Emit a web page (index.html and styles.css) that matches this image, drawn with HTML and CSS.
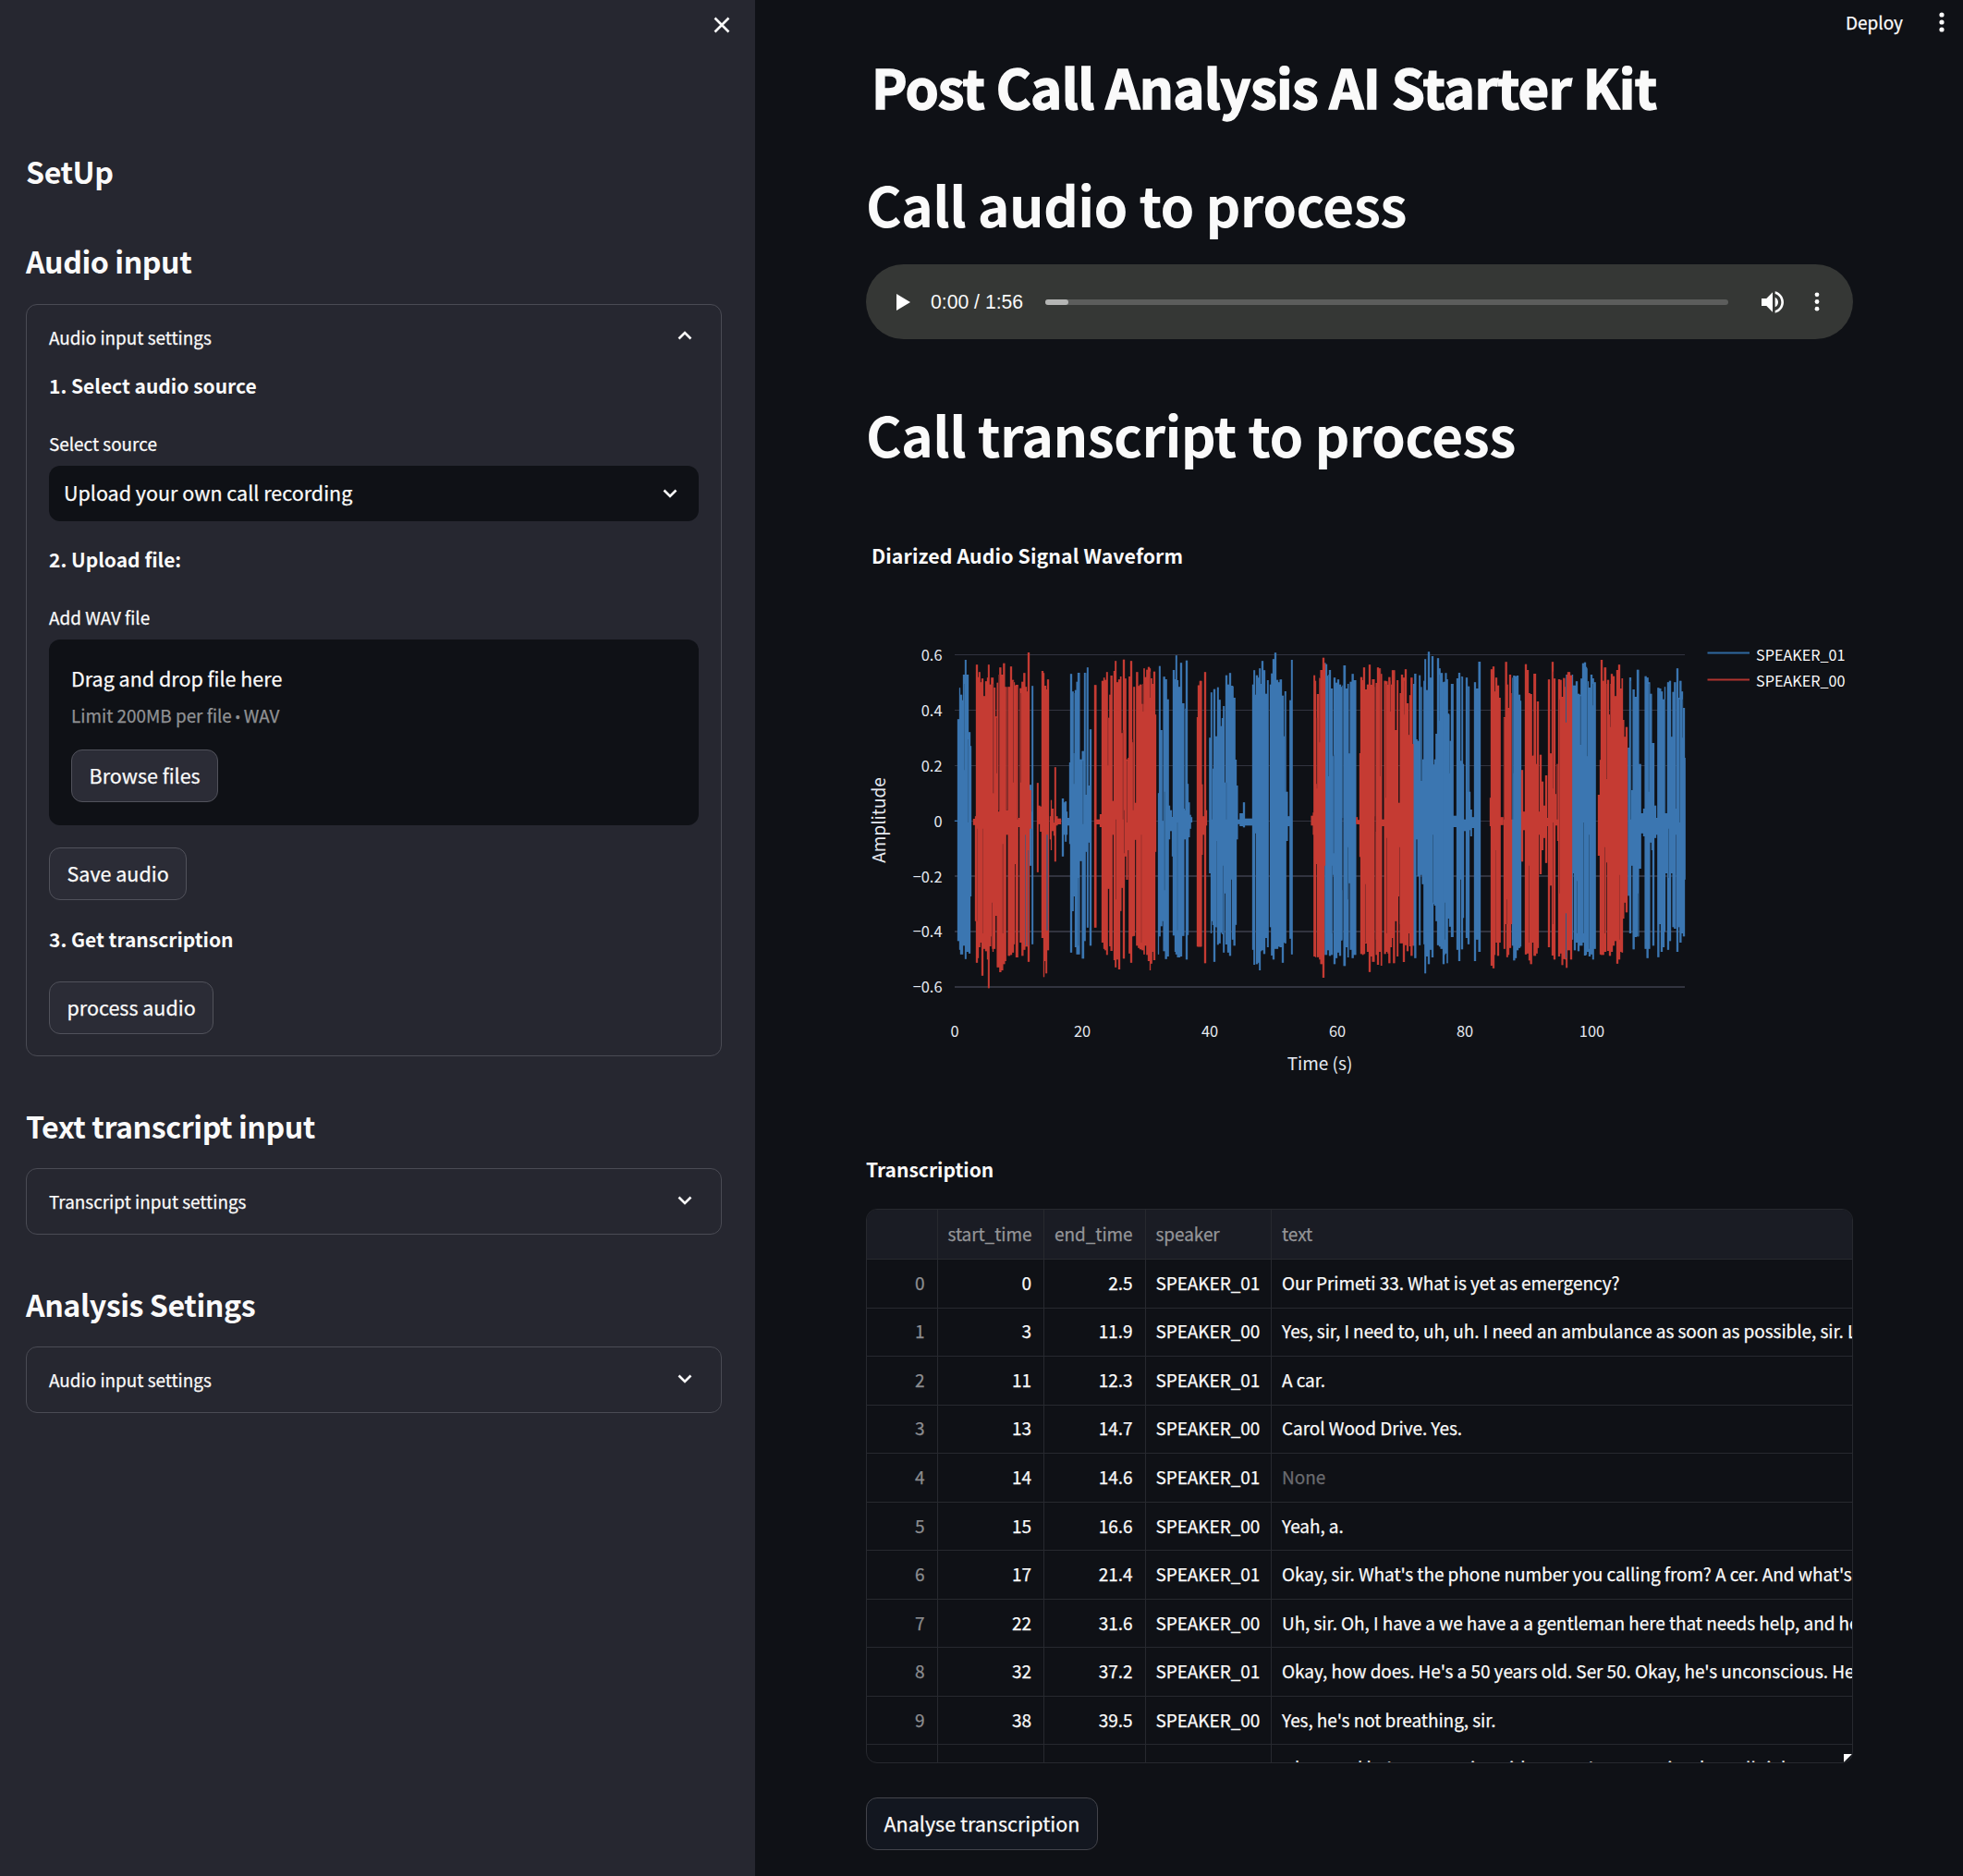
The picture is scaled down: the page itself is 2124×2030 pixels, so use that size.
FILE: index.html
```html
<!DOCTYPE html>
<html lang="en">
<head>
<meta charset="utf-8">
<title>Post Call Analysis AI Starter Kit</title>
<link rel="stylesheet" href="styles.css">
</head>
<body>
<div class="app">
  <aside class="sidebar">
    <div class="sidebar-top">
      <svg class="close" viewBox="0 0 20 20"><path d="M2.5 2.5 17.5 17.5M17.5 2.5 2.5 17.5"/></svg>
    </div>
    <h2 class="side-title first">SetUp</h2>
    <h2 class="side-title second">Audio input</h2>
    <section class="expander open">
      <div class="summary"><span>Audio input settings</span><svg class="chev" viewBox="0 0 16 10"><path d="M1.5 8.5 8 2l6.500 6.500"/></svg></div>
      <div class="expander-body">
        <p class="step">1. Select audio source</p>
        <label class="field-label">Select source</label>
        <div class="select"><span>Upload your own call recording</span><svg class="chev" viewBox="0 0 16 10"><path d="M1.500 1.500 8 8l6.500-6.500"/></svg></div>
        <p class="step">2. Upload file:</p>
        <label class="field-label">Add WAV file</label>
        <div class="uploader">
          <div class="drag">Drag and drop file here</div>
          <div class="limit">Limit 200MB per file <span class="bullet">•</span> WAV</div>
          <button class="btn">Browse files</button>
        </div>
        <button class="btn save">Save audio</button>
        <p class="step">3. Get transcription</p>
        <button class="btn process">process audio</button>
      </div>
    </section>
    <h2 class="side-title later">Text transcript input</h2>
    <section class="expander">
      <div class="summary"><span>Transcript input settings</span><svg class="chev" viewBox="0 0 16 10"><path d="M1.500 1.500 8 8l6.500-6.500"/></svg></div>
    </section>
    <h2 class="side-title later">Analysis Setings</h2>
    <section class="expander">
      <div class="summary"><span>Audio input settings</span><svg class="chev" viewBox="0 0 16 10"><path d="M1.500 1.500 8 8l6.500-6.500"/></svg></div>
    </section>
  </aside>

  <main class="main">
    <header class="toolbar">
      <span>Deploy</span>
      <svg class="kebab" viewBox="0 0 6 22"><circle cx="3" cy="3" r="2.600"/><circle cx="3" cy="11" r="2.600"/><circle cx="3" cy="19" r="2.600"/></svg>
    </header>
    <div class="content">
      <h1 class="title">Post Call Analysis AI Starter Kit</h1>
      <h1 class="heading call-audio">Call audio to process</h1>
      <div class="player">
        <svg class="play" viewBox="0 0 15 18"><path d="M0 0v18l15-9z"/></svg>
        <span class="time">0:00 / 1:56</span>
        <div class="track"><div class="buffered"></div></div>
        <svg class="volume" viewBox="3 3 18 18"><path d="M3 9v6h4l5 5V4L7 9H3zm13.500 3A4.500 4.500 0 0 0 14 7.970v8.050c1.480-.73 2.500-2.250 2.500-4.020zM14 3.230v2.060c2.890.86 5 3.540 5 6.710s-2.110 5.850-5 6.710v2.060c4.010-.91 7-4.490 7-8.770s-2.990-7.860-7-8.770z"/></svg>
        <svg class="player-menu" viewBox="0 0 6 22"><circle cx="3" cy="3" r="2.500"/><circle cx="3" cy="11" r="2.500"/><circle cx="3" cy="19" r="2.500"/></svg>
      </div>
      <h1 class="heading call-transcript">Call transcript to process</h1>

      <svg class="chart" viewBox="937 560 1068 640">
        <text class="chart-title" x="943" y="609.500" textLength="337">Diarized Audio Signal Waveform</text>
        <g class="grid">
          <path d="M1033 708.500H1823M1033 768.500H1823M1033 828.500H1823M1033 888.500H1823" stroke-width="1"/>
          <path d="M1033 948H1823M1033 1008H1823M1033 1068H1823" stroke-width="2"/>
        </g>
        <g id="waves" transform="translate(1030 690) scale(.33333)"></g>
        <g class="tick" text-anchor="end">
          <text x="1019.500" y="715">0.6</text><text x="1019.500" y="775">0.4</text><text x="1019.500" y="835">0.2</text><text x="1019.500" y="895">0</text>
          <text x="1019.500" y="955">−0.2</text><text x="1019.500" y="1014">−0.4</text><text x="1019.500" y="1074">−0.6</text>
        </g>
        <g class="tick" text-anchor="middle">
          <text x="1033" y="1122">0</text><text x="1171" y="1122">20</text><text x="1309" y="1122">40</text><text x="1447" y="1122">60</text><text x="1585" y="1122">80</text><text x="1722.500" y="1122">100</text>
        </g>
        <text class="axis" x="1428" y="1157.500" text-anchor="middle">Time (s)</text>
        <text class="axis" transform="translate(958 887.500) rotate(-90)" text-anchor="middle">Amplitude</text>
        <path d="M1847.500 706.500h45.500" stroke="#2f69a0" stroke-width="2"/>
        <path d="M1847.500 735.500h45.500" stroke="#b0342f" stroke-width="2"/>
        <g class="legend"><text x="1900" y="714.500">SPEAKER_01</text><text x="1900" y="742.500">SPEAKER_00</text></g>
      </svg>

      <h4 class="table-title">Transcription</h4>
      <div class="table-wrap">
        <table class="table">
          <colgroup><col class="c-idx"><col class="c-start"><col class="c-end"><col class="c-speaker"><col></colgroup>
          <thead><tr><th></th><th>start_time</th><th>end_time</th><th>speaker</th><th>text</th></tr></thead>
          <tbody>
            <tr><td>0</td><td>0</td><td>2.5</td><td>SPEAKER_01</td><td>Our Primeti 33. What is yet as emergency?</td></tr>
            <tr><td>1</td><td>3</td><td>11.9</td><td>SPEAKER_00</td><td>Yes, sir, I need to, uh, uh. I need an ambulance as soon as possible, sir. L</td></tr>
            <tr><td>2</td><td>11</td><td>12.3</td><td>SPEAKER_01</td><td>A car.</td></tr>
            <tr><td>3</td><td>13</td><td>14.7</td><td>SPEAKER_00</td><td>Carol Wood Drive. Yes.</td></tr>
            <tr><td>4</td><td>14</td><td>14.6</td><td>SPEAKER_01</td><td class="none">None</td></tr>
            <tr><td>5</td><td>15</td><td>16.6</td><td>SPEAKER_00</td><td>Yeah, a.</td></tr>
            <tr><td>6</td><td>17</td><td>21.4</td><td>SPEAKER_01</td><td>Okay, sir. What's the phone number you calling from? A cer. And what's</td></tr>
            <tr><td>7</td><td>22</td><td>31.6</td><td>SPEAKER_00</td><td>Uh, sir. Oh, I have a we have a a gentleman here that needs help, and he</td></tr>
            <tr><td>8</td><td>32</td><td>37.2</td><td>SPEAKER_01</td><td>Okay, how does. He's a 50 years old. Ser 50. Okay, he's unconscious. He</td></tr>
            <tr><td>9</td><td>38</td><td>39.5</td><td>SPEAKER_00</td><td>Yes, he's not breathing, sir.</td></tr>
            <tr><td>10</td><td>40</td><td>53</td><td>SPEAKER_01</td><td>Okay, and he's not moving either. Don't worry, sir. Okay, all right.</td></tr>
          </tbody>
        </table>
        <svg class="corner" viewBox="0 0 9 9"><path d="M0 0h9L0 9z"/></svg>
      </div>
      <button class="btn analyse">Analyse transcription</button>
    </div>
  </main>
</div>
<script src="wave.js"></script>
</body>
</html>
```
FILE: wave.js
```js
// Waveform columns: start x, end x, top, bottom (three units per pixel), one list per chart third.
const thirds = [
  {
    offset: 0,
    blue: `9 20 593 597;18 24 265 985;24 27 163 1013;27 33 185 1028;33 36 203 1028;36 42 120 1000;42 47 72 1043;47 54 120 1020;54 60 307 1025;60 63 352 840;
      252 258 478 740;257 260 565 620;259 264 157 995;357 363 522 710;363 367 535 640;367 372 532 662;372 375 565 640;375 384 585 610;381 384 405 670;384 390 118 1022;390 395 175 888;395 400 375 840;399 404 170 1005;404 408 143 1028;408 415 114 1028;415 424 395 725;422 429 368 1042;429 434 114 985;434 438 510 695;438 443 97 941;443 447 480 665;447 453 298 1000;
      669 672 505 1028;672 677 92 970;677 683 300 937;683 687 595 920;686 692 127 1018;692 698 135 1043;698 704 200 1035;704 708 545 655;707 714 560 628;714 717 582 710;717 723 105 967;723 726 135 1020;726 731 58 1028;731 735 138 1038;735 741 160 1038;741 747 82 1035;747 754 213 968;754 759 555 655;759 765 74 1045;765 768 475 965;768 772 535 648;772 776 575 620;776 780 583 600`,
    red: `69 78 588 608;75 79 580 920;78 84 88 1055;84 87 128 1040;87 92 112 1005;92 97 145 990;96 102 133 1097;102 108 190 1010;108 114 142 1018;114 117 130 1045;117 122 88 1138;122 127 152 1002;127 132 130 970;132 135 130 1020;135 141 162 1010;141 146 256 903;146 150 146 1070;150 155 565 1070;154 160 97 1086;160 166 120 1080;166 172 83 1060;172 176 160 1050;176 182 560 640;182 189 160 1033;189 195 94 1030;195 201 137 1022;201 204 145 995;204 207 155 735;207 215 153 1038;215 221 585 615;220 226 164 990;226 232 143 1033;232 238 115 1013;238 243 160 1003;243 249 175 1003;246 252 48 1052;252 257 495 620;
      276 281 472 761;281 286 545 605;286 291 548 630;291 297 108 975;297 300 115 1102;300 306 156 1050;304 309 168 1090;309 315 136 1015;318 321 580 655;321 324 527 690;324 330 555 628;330 333 600 643;333 338 421 727;338 343 580 610;343 354 587 606;
      462 469 154 941;469 480 590 606;480 486 573 615;486 492 140 990;492 496 130 1010;496 501 137 1015;501 506 112 1030;506 511 260 815;511 515 185 1002;515 521 123 1017;521 526 530 640;525 529 108 1047;529 534 76 1070;534 540 145 1045;540 546 136 1077;546 550 126 887;550 555 310 812;555 561 71 1042;561 566 133 710;566 571 395 786;571 574 390 690;574 579 126 1025;579 585 76 1055;585 589 340 970;589 594 160 968;594 598 536 656;598 604 112 1000;604 609 157 1007;609 616 152 1012;616 622 215 1015;622 626 100 1028;626 631 128 1000;631 636 104 1030;636 642 95 1050;642 645 100 1080;645 650 132 1058;650 655 150 1020;654 660 110 1047;660 663 250 695;795 799 258 1003;799 804 155 1003;804 811 140 1003`,
    dark: `0 39 41 150 430 b;0 51 53 330 600 b;0 81 83 620 920 r;0 99 101 620 960 r;0 132 136 150 505 r;0 144 147 260 440 r;0 151 155 120 560 r;0 129 132 860 1010 r;0 164 167 670 960 r;0 198 201 140 470 r;0 212 215 160 590 r;0 177 182 160 560 r;0 222 225 180 470 r;0 238 240 640 1000 b;0 247 249 690 1000 b;0 307 311 640 950 b;0 395 398 180 475 b;0 409 412 780 1000 b;0 424 427 400 605 b;0 434 437 115 510 b;0 505 508 260 415 r;0 531 534 590 850 r;0 554 557 300 590 r;0 567 570 400 600 r;0 587 590 330 560 r;0 619 622 150 240 r;0 642 645 110 195 r;0 689 692 500 820 b;0 731 733 600 950 b;0 756 759 230 560 b;0 614 616 640 990 r;0 558 561 560 700 r`
  },
  {
    offset: 798,
    blue: `37 42 325 765;42 45 178 960;45 51 573 920;48 51 425 933;51 57 167 1052;57 63 320 940;63 68 161 997;68 74 202 992;74 78 287 958;78 82 261 962;82 87 222 1022;87 92 470 830;90 96 122 996;96 102 152 1022;102 108 115 1033;108 114 156 785;111 116 158 980;116 122 195 1000;122 126 396 932;126 130 480 655;130 138 590 605;136 147 570 612;147 153 535 616;153 178 587 610;
      177 181 152 1013;181 186 106 1062;186 190 185 635;189 195 122 1060;195 199 130 1055;199 204 100 1080;204 207 150 1018;207 213 76 1015;213 219 106 1027;219 225 182 975;225 230 138 1005;234 238 152 940;238 243 116 1032;243 249 70 1045;249 255 49 1010;255 261 137 1010;261 266 145 1003;266 273 136 1005;273 279 188 1055;279 285 320 990;282 287 174 992;287 292 500 660;292 300 580 612;298 303 203 977;303 308 72 1028;
      412 415 82 1030;415 420 86 1030;420 426 124 1015;426 432 105 1033;432 438 165 1030;438 441 385 770;441 447 130 1060;447 453 146 1040;453 459 136 1022;459 465 152 1033;465 469 160 983;473 480 90 1066;480 486 165 1005;486 490 150 1038;490 494 376 797;494 500 143 1013;500 506 118 1040;506 514 138 1030;
      699 703 150 1000;703 709 117 1040;709 713 330 655;713 720 335 775;718 723 122 998;723 728 465 770;728 733 395 800;733 739 140 995;736 741 70 1090;741 747 170 1035;747 753 46 1060;753 759 130 1013;759 765 60 1038;765 771 412 865;768 774 395 870;772 777 312 920;777 783 67 998;783 788 100 1003;788 795 115 1010;795 801 145 1060`,
    red: `0 6 155 1003;6 12 142 1003;12 16 476 705;16 21 580 640;21 27 112 1057;27 30 560 610;368 374 578 610;374 378 568 640;376 381 122 1035;381 384 140 1037;384 388 475 735;387 394 183 1037;394 400 132 1045;398 405 105 1060;405 411 65 1104;411 414 85 740;
      514 519 583 605;519 525 592 606;525 528 375 712;528 534 128 1027;534 538 138 1030;537 543 97 1027;543 549 168 993;549 555 152 1020;555 561 88 1085;561 566 153 1035;566 574 135 1052;578 583 147 1030;582 588 97 1062;588 594 100 1020;594 598 118 1065;598 605 590 612;605 611 140 1027;611 616 142 1020;616 620 153 1025;619 625 128 1057;625 630 152 1005;630 637 106 975;634 640 106 1057;640 646 300 920;646 651 138 1035;651 657 536 840;656 660 180 992;660 666 120 992;666 672 130 1053;672 678 103 998;678 684 213 1018;684 689 316 960;687 693 187 1002;691 697 130 1033;697 700 345 1000`,
    dark: `0 45 48 178 590 b;0 92 94 470 590 b;0 61 63 660 940 b;0 81 84 740 960 b;0 228 230 140 300 b;0 284 287 190 500 b;0 423 426 120 450 b;0 440 443 380 700 b;0 468 473 155 585 b;0 468 471 820 980 b;0 486 489 680 850 b;0 435 437 740 960 b;0 394 397 130 340 r;0 386 388 260 490 r;0 543 546 800 990 r;0 573 577 160 580 r;0 576 579 630 980 r;0 591 593 100 450 r;0 609 611 150 520 r;0 624 627 140 240 r;0 612 615 650 960 r;0 654 657 680 930 r;0 670 672 140 250 r;0 723 729 160 465 b;0 762 765 640 860 b;0 783 785 120 270 b`
  },
  {
    offset: 1596,
    blue: `0 5 143 1030;5 10 115 1025;10 14 135 1057;14 18 247 912;18 24 335 938;24 32 150 972;32 42 578 615;42 48 132 1013;48 54 114 1050;54 57 400 785;57 63 127 1012;63 66 410 910;66 72 590 628;72 78 130 975;78 84 158 995;84 87 500 625;87 92 558 645;92 99 583 618;99 105 145 1050;105 113 165 980;113 120 78 1020;
      222 226 440 1000;226 232 123 1048;232 237 125 1040;237 243 123 1015;243 249 185 1007;249 252 205 1003;
      417 420 120 980;420 426 155 765;423 429 155 1015;429 435 142 990;435 441 182 1018;441 447 185 1000;445 451 133 1000;450 456 83 990;456 462 80 1032;462 465 95 1030;465 471 142 1020;471 477 162 1035;477 483 120 1028;483 488 132 1045;488 494 145 1010;
      598 603 357 838;603 609 129 960;609 614 495 740;614 620 168 1012;620 627 192 972;627 634 104 970;634 641 410 750;641 648 570 635;648 654 555 645;653 659 125 1010;659 665 130 1040;665 670 145 1010;670 676 182 665;675 680 342 690;678 684 342 1000;684 690 545 650;690 694 585 640;694 700 163 1037;700 706 165 930;705 711 175 1020;711 717 200 1005;717 720 160 955;720 726 570 765;726 732 145 1013;732 738 140 985;738 744 322 765;743 748 176 940;748 754 145 945;754 757 555 640;756 762 100 1020;762 766 195 940;766 772 140 990;772 777 175 960;777 783 228 970;783 785 390 785`,
    red: `150 154 520 612;153 159 103 1065;159 165 94 1073;165 168 175 1030;168 174 130 990;174 180 155 1033;180 185 195 990;185 194 583 608;195 200 258 1010;200 206 79 930;204 209 152 1037;209 213 228 1030;213 219 120 1007;219 222 180 930;
      252 258 430 727;258 264 565 625;264 270 86 1028;270 276 105 1025;276 281 180 1048;281 287 183 1060;287 292 383 990;292 300 117 1033;300 305 410 1025;303 309 207 1007;309 314 565 640;312 318 380 768;318 324 467 690;324 330 545 650;330 336 447 731;336 340 585 612;339 345 136 1005;345 351 376 805;351 357 79 1032;357 363 133 1045;363 369 508 610;369 373 415 660;372 378 135 1035;378 383 137 1025;383 388 192 1063;388 394 131 1043;394 397 160 1045;397 402 120 1072;402 411 112 1015;411 417 122 1045;
      501 507 510 708;507 511 397 1028;510 516 72 1030;516 521 140 1030;521 528 97 1020;528 532 458 730;531 537 137 1017;537 543 250 1033;543 549 118 1020;549 555 125 1000;555 561 190 985;561 567 105 1058;567 573 88 1045;573 578 165 1020;578 582 132 1022;582 586 267 912;586 592 322 860;591 597 290 892`,
    dark: `0 18 20 250 440 b;0 3 6 860 980 b;0 57 60 130 400 b;0 78 80 160 500 b;0 168 170 690 990 r;0 195 198 260 590 r;0 204 207 850 930 r;0 222 226 130 590 b;0 219 222 180 590 r;0 276 279 740 990 r;0 291 294 240 380 r;0 354 356 110 490 r;0 354 357 600 930 r;0 366 372 410 590 r;0 376 378 200 830 r;0 396 399 120 275 b;0 396 399 895 1040 b;0 443 447 190 348 b;0 465 468 100 385 b;0 453 456 600 960 b;0 471 474 640 1010 b;0 432 435 790 960 b;0 483 486 150 220 b;0 522 525 680 960 r;0 540 543 150 290 r;0 528 531 150 458 r;0 570 572 770 980 r;0 606 609 140 590 b;0 665 668 150 500 b;0 630 633 830 970 b;0 717 720 200 570 b;0 729 732 620 780 b;0 765 768 200 600 b;0 774 777 200 325 b`
  }
];

const NS = "http://www.w3.org/2000/svg";
const root = document.getElementById("waves");
function addPath(d, cls) {
  const p = document.createElementNS(NS, "path");
  p.setAttribute("d", d);
  p.setAttribute("class", cls);
  root.appendChild(p);
}
const rows = s => s.split(";").map(r => r.trim().split(/\s+/));
const toPath = (s, offset, grow) => rows(s).map(r => {
  const [a, b, t, u] = r.map(Number);
  return `M${a + offset - grow} ${t}H${b + offset + grow}V${u}H${a + offset - grow}z`;
}).join("");
for (const color of ["blue", "red"]) {
  for (const t of thirds) {
    addPath(toPath(t[color], t.offset, 1), color + " edge");
    addPath(toPath(t[color], t.offset, 0), color);
  }
}
for (const t of thirds) {
  for (const r of rows(t.dark)) {
    const [, a, b, top, bottom] = r.map(Number);
    addPath(`M${a + t.offset} ${top}H${b + t.offset}V${bottom}H${a + t.offset}z`, "shade-" + r[5]);
  }
}
```
FILE: styles.css
```css
* { box-sizing: border-box; }
body {
  margin: 0;
  background: #0f1116;
  color: #fafafa;
  font-family: "Noto Sans CJK SC", "Open Sans", sans-serif;
  font-size: 21.5px;
  -webkit-text-stroke: .25px;
}
h1, h2, h4, p { margin: 0; }
svg { display: block; flex: none; }
.app { display: flex; height: 2030px; overflow: hidden; }

.sidebar { width: 817px; flex: none; background: #262730; padding: 0 36px 0 28px; }
.sidebar-top { height: 163px; padding: 17px 0 0; display: flex; justify-content: flex-end; }
.close { width: 20px; height: 20px; margin-right: -10px; fill: none; stroke: #fafafa; stroke-width: 2.6; }
.side-title { font-size: 32.2px; line-height: 44px; font-weight: 700; letter-spacing: -.45px; -webkit-text-stroke: 0; }
.second { margin-top: 53px; }
.later { margin-top: 53px; }
.later + .expander { margin-top: 24px; }
.expander { margin-top: 25px; height: 72px; border: 1px solid #4a4b54; border-radius: 12px; }
.expander.open { height: 814px; }
.summary { height: 70px; padding: 0 31px 0 24px; display: flex; align-items: center; justify-content: space-between; font-size: 18.9px; line-height: 30px; }
.chev { width: 16px; height: 10px; margin-top: -3px; fill: none; stroke: #fafafa; stroke-width: 2.6; }
.select .chev { margin-top: 0; }
.expander.open .summary { height: 69px; }
.expander-body { padding: 0 24px; display: flex; flex-direction: column; align-items: flex-start; }
.step { padding-top: 1px; line-height: 35px; font-weight: 700; font-size: 21px; -webkit-text-stroke: 0; }
.field-label { margin-top: 30px; font-size: 18.9px; line-height: 30px; }
.select { width: 703px; height: 60px; margin: 9px 0 23px; padding: 0 23px 0 16px; display: flex; align-items: center; justify-content: space-between; border-radius: 12px; background: #0f1116; }
.select span { line-height: 34px; margin-top: -2px; }
.uploader { width: 703px; height: 201px; margin-top: 9px; padding: 24px 24px; border-radius: 12px; background: #0f1116; }
.drag { line-height: 36px; }
.limit { margin: 7px 0 23px; font-size: 18.9px; line-height: 29px; color: #909194; }
.bullet { font-family: "Open Sans", sans-serif; font-size: 17px; margin: 0 -1px; line-height: 1; }
.btn { height: 57px; padding: 0 18.500px 2px; border: 1px solid #51525b; border-radius: 12px; background: #2b2c36; color: #fafafa; font: inherit; line-height: 50px; white-space: nowrap; display: block; -webkit-text-stroke: .25px; }
.save { margin: 24px 0; }
.process { margin-top: 28px; }

.main { flex: 1; min-width: 0; }
.toolbar { height: 46px; padding: 0 20px 0 0; display: flex; align-items: center; justify-content: flex-end; gap: 39px; font-size: 19px; }
.kebab { width: 6px; height: 22px; margin-top: 2px; fill: #fafafa; }
.content { width: 1068px; margin-left: 120px; }
.title { height: 80px; margin: 7px 0 0 6px; line-height: 80px; font-size: 58px; font-weight: 700; letter-spacing: -.7px; white-space: nowrap; -webkit-text-stroke: 1.4px; }
.heading { font-size: 59px; line-height: 80px; font-weight: 700; letter-spacing: -.67px; white-space: nowrap; -webkit-text-stroke: 0; }
.call-audio { margin-top: 48px; }
.player { height: 81px; margin-top: 25px; padding: 0 36px 0 33px; display: flex; align-items: center; border-radius: 41px; background: #353735; -webkit-text-stroke: 0; }
.play { width: 15px; height: 18px; fill: #fff; }
.time { width: 124px; margin-left: 22px; font: 21.2px/30px "Liberation Sans", sans-serif; }
.track { width: 739px; height: 6px; border-radius: 3px; background: #5c5d5c; }
.buffered { width: 25px; height: 6px; border-radius: 3px; background: #b4b5b4; }
.volume { width: 24px; height: 24px; margin-left: 36px; fill: #fff; }
.player-menu { width: 6px; height: 21px; margin-left: auto; fill: #fff; }
.call-transcript { margin-top: 63px; }

.chart { width: 1068px; height: 640px; margin-top: 50px; fill: #fafafa; }
.chart-title { font-size: 21.3px; font-weight: 700; -webkit-text-stroke: .5px; }
.grid { stroke: #31333f; fill: none; }
.tick { font-size: 16.400px; fill: #e6eaf1; }
.axis { font-size: 19px; fill: #e6eaf1; }
.legend { font-size: 16.200px; }
.blue { fill: #3b76b1; }
.red { fill: #c53b33; }
.edge { opacity: .5; }
.shade-b { fill: #2e5c89; }
.shade-r { fill: #8f2f2c; }

.table-title { margin-top: 49px; font-size: 21px; line-height: 32px; font-weight: 700; -webkit-text-stroke: 0; }
.table-wrap { position: relative; height: 600px; margin-top: 27px; overflow: hidden; border: 1px solid #27292f; border-radius: 12px; }
.table { width: 1066px; border-collapse: separate; border-spacing: 0; table-layout: fixed; font-size: 19px; line-height: 30px; letter-spacing: -.06px; }
.c-idx { width: 76.500px; } .c-start { width: 115.500px; } .c-end { width: 109.500px; } .c-speaker { width: 136.500px; }
th, td { height: 52.550px; padding: 0 13px 2px 11px; border-right: 1px solid #27292f; border-bottom: 1px solid #27292f; text-align: right; font-weight: 400; white-space: nowrap; overflow: hidden; }
th { height: 54px; padding-bottom: 1px; background: #1a1c24; color: #949598; }
th:nth-child(n+4), td:nth-child(n+4) { text-align: left; padding-right: 0; }
th:last-child, td:last-child { border-right: 0; }
td:first-child { color: #8c8d90; }
td.none { color: #6a6b6f; }
.corner { position: absolute; right: 0; bottom: 0; width: 9px; height: 9px; fill: #fff; }
.analyse { margin-top: 37px; background: #131720; border-color: #43444b; }
```
